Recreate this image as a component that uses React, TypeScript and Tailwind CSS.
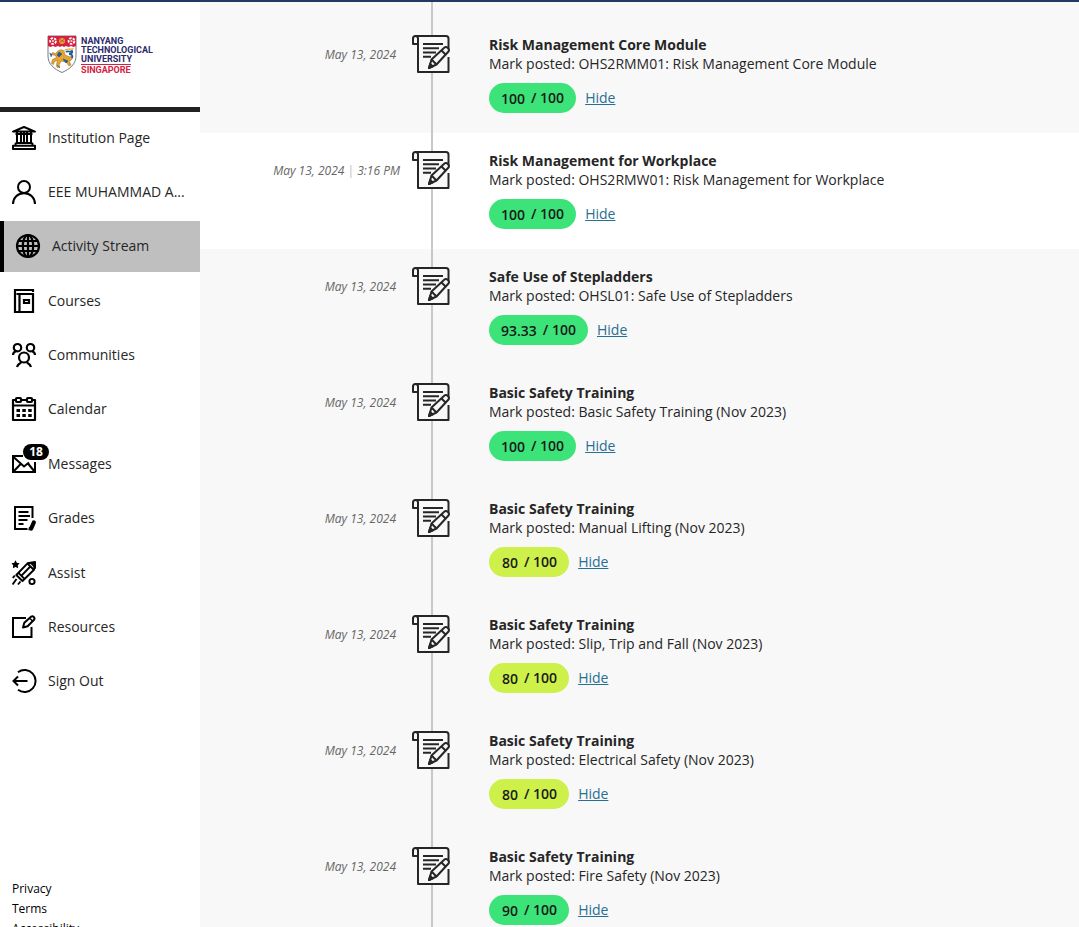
import type { ReactNode } from "react";

function Icon({ children, width = 2 }: { children: ReactNode; width?: number }) {
  return (
    <svg
      viewBox="0 0 24 24"
      className="size-6 shrink-0 overflow-visible"
      fill="none"
      stroke="currentColor"
      strokeWidth={width}
      aria-hidden="true"
    >
      {children}
    </svg>
  );
}

const InstitutionIcon = () => (
  <Icon width={2}>
    <path d="M1 5.6 12 1l11 4.6H1Z" strokeLinejoin="round" />
    <path d="M5 6v11M9 6v11M12 6v11M15 6v11M19 6v11M3.5 8h17M3.5 17h17" />
    <path d="M3.6 17v2.8M20.4 17v2.8M1 23v-3.2h22V23H1Z" strokeLinejoin="round" />
  </Icon>
);

const PersonIcon = () => (
  <Icon>
    <circle cx="12" cy="7" r="6" />
    <path d="M1 24c0-6.4 4.8-10.8 11-10.8S23 17.6 23 24" />
  </Icon>
);

const GlobeIcon = () => (
  <Icon width={2.2}>
    <circle cx="12" cy="12" r="11" />
    <ellipse cx="12" cy="12" rx="5.2" ry="11" />
    <path d="M12 1v22M1 12h22M3 7h18M3 17h18" />
  </Icon>
);

const BookIcon = () => (
  <Icon width={2.2}>
    <path d="M22 1H3v22h18V5H4.500M21 0v3M7.500 5v18M3 5V2" />
    <path d="M12 11h5v3h-5z" />
  </Icon>
);

const PeopleIcon = () => (
  <Icon width={2.200}>
    <circle cx="5.500" cy="4.700" r="3.700" />
    <circle cx="18.500" cy="4.700" r="3.700" />
    <circle cx="12" cy="14.500" r="5" />
    <path d="M1 12c0-2 1-3 3-3.700M23 12c0-2-1-3-3-3.700M5 24c.6-2.200 2-3.500 4.200-4.600M19 24c-.6-2.200-2-3.500-4.200-4.600" />
  </Icon>
);

const CalendarIcon = () => (
  <Icon width={2.200}>
    <path d="M3.500 3H1v20h22V3h-2.500M9.500 3h5M1 8.500h22" strokeLinejoin="round" />
    <rect x="4" y="1" width="5" height="4" rx="1" />
    <rect x="15" y="1" width="5" height="4" rx="1" />
    <path d="M4.500 13.500h3.500M10.300 13.500h3.500M16.200 13.500h3.500M4.500 18.500h3.500M10.300 18.500h3.500M16.200 18.500h3.500" strokeWidth="3" />
  </Icon>
);

const MailIcon = () => (
  <Icon>
    <path d="M11 4H1v16h22V10M1.500 5l10.500 9.500L17 10.500M1.500 19.500l7.200-7.500M22.500 19.500 16 11.500" />
  </Icon>
);

const GradesIcon = () => (
  <Icon>
    <path d="M20.500 12V1H3v22h12.500M6.500 6h10M6.500 10h11.500M6.500 14h9M6.500 18h5" />
    <path d="m21.800 16.500-2.600 6" strokeWidth="4.200" strokeLinecap="round" />
    <path d="m17.500 21-.7 3 2.500-1z" strokeWidth="1" />
  </Icon>
);

const RocketIcon = () => (
  <Icon width={1.900}>
    <path d="M15.500 2.300 23 1l-1 7.800L10.500 20 4.300 14 15.500 2.300Z" strokeLinejoin="round" />
    <path d="m15.500 2.500 6 6M6.500 11.800l6 6M9 15.200 18.800 5M19 2h4v4z" />
    <circle cx="20" cy="20.500" r="2.600" />
    <path d="m3.500 1.200.8 1.400 1.500.3-1 1.200.2 1.600-1.500-.7-1.500.7.200-1.600-1-1.200 1.500-.3Z" fill="currentColor" />
    <path d="M2.800 14.500.8 17M4.500 18 .6 23.500M8.500 20.500 6 23.500" />
  </Icon>
);

const ComposeIcon = () => (
  <Icon>
    <path d="M14 3H1v19h18.500V12" />
    <path d="m11 12.500 1.300-4.700 7-6.200c1.700-1 4 1.200 3 2.900l-6.700 6.700L11 12.500Z" strokeLinejoin="round" />
    <path d="m18 3.500 2.800 2.800" strokeWidth="1.400" />
  </Icon>
);

const SignOutIcon = () => (
  <Icon>
    <path d="M6 3.200a11 11 0 1 1 0 17.600M15.500 12H1.500M6 7.500 1.500 12 6 16.500" />
  </Icon>
);

const MarkIcon = () => (
  <svg
    viewBox="0 0 38 40"
    className="h-10 w-[38px]"
    fill="none"
    stroke="#262626"
    strokeWidth="2"
    strokeLinejoin="round"
    aria-hidden="true"
  >
    <path d="M3.500 2H34c1.500 0 2.500 1 2.500 2.500V38H6V4.500C6 3 5 2 3.500 2S1 3 1 4.500V10h5" fill="#f8f8f8" />
    <path d="M11 10h20M11 14.300h16M11 18.500h13M11 22.700h8" />
    <path d="M36.500 16v7" stroke="#f8f8f8" strokeWidth="3" />
    <path d="m17 34 2.500-8.500L32.500 13.500c2.300-1.500 5.500 1.800 4 4L24.500 30.500 17 34Z" fill="#f8f8f8" />
    <path d="m29.500 16.500 4.300 4.300M19.500 25.500l5 5" />
    <path d="m17 34 1.200-4 2.600 2.400z" fill="#262626" />
  </svg>
);

const Rose = ({ x }: { x: number }) => (
  <g transform={`translate(${x} 6)`}>
    <circle r="2.900" fill="none" stroke="#fff" strokeWidth="1.800" strokeDasharray="2.500 1.140" />
    <circle r="1.100" fill="#f7d9dd" />
  </g>
);

const Crest = () => (
  <svg viewBox="0 0 30 38" className="h-[38px] w-[30px]" aria-hidden="true">
    <path d="M1 1h28v20c0 8-6 13-14 16.500C7 34 1 29 1 21V1Z" fill="#fff" stroke="#77798c" strokeWidth="1" />
    <path d="M1 1h28v10l-2.500 1-2.500-1-2.500 1-2.500-1-2 1-2-1-2 1-2-1-2.500 1-2.500-1-2.500 1L1 11V1Z" fill="#d5213f" />
    <Rose x={6} />
    <Rose x={24.5} />
    <circle cx="15" cy="6" r="3" fill="#e2a33c" />
    <path d="M13 4.500 17 7M17 4.500 13 7" stroke="#a8602c" strokeWidth=".8" />
    <path d="M10 17c2-2.500 5-3 7-1l1 4 5 2 2-1c1 3-1 5-3 5l2 4-2 1-3-4-5-1-2 4 1 2-3 .500-.500-3 1-4-3 1-1 3-2-1 1-4 4-2-1-2-4-1 1-2 3 1Z" fill="#e8a52b" stroke="#90652b" strokeWidth=".5" />
    <path d="m12 17 3 2-3 3-2-2zM2.500 18l2.500 1.500-1 2.500M16 24l5 2-2 2zM10 30l3 3" fill="#285996" stroke="#285996" strokeWidth=".7" />
    <path d="M19 17c2-2 4 1 6-1 1 2-1 3-3 2.500M22 19c3 0 4 2 3 4" fill="none" stroke="#285996" strokeWidth="1.800" />
    <path d="M17.500 15.500c3-3 6 0 9-2" fill="none" stroke="#e8a52b" strokeWidth="1.200" />
  </svg>
);

const menu = [
  { label: "Institution Page", icon: <InstitutionIcon /> },
  { label: "EEE MUHAMMAD A...", icon: <PersonIcon /> },
  { label: "Activity Stream", icon: <GlobeIcon />, active: true },
  { label: "Courses", icon: <BookIcon /> },
  { label: "Communities", icon: <PeopleIcon /> },
  { label: "Calendar", icon: <CalendarIcon /> },
  { label: "Messages", icon: <MailIcon />, badge: 18 },
  { label: "Grades", icon: <GradesIcon /> },
  { label: "Assist", icon: <RocketIcon /> },
  { label: "Resources", icon: <ComposeIcon /> },
  { label: "Sign Out", icon: <SignOutIcon /> },
];

const entries = [
  { title: "Risk Management Core Module", item: "OHS2RMM01: Risk Management Core Module", score: "100" },
  { title: "Risk Management for Workplace", item: "OHS2RMW01: Risk Management for Workplace", score: "100", time: "3:16 PM" },
  { title: "Safe Use of Stepladders", item: "OHSL01: Safe Use of Stepladders", score: "93.33" },
  { title: "Basic Safety Training", item: "Basic Safety Training (Nov 2023)", score: "100" },
  { title: "Basic Safety Training", item: "Manual Lifting (Nov 2023)", score: "80" },
  { title: "Basic Safety Training", item: "Slip, Trip and Fall (Nov 2023)", score: "80" },
  { title: "Basic Safety Training", item: "Electrical Safety (Nov 2023)", score: "80" },
  { title: "Basic Safety Training", item: "Fire Safety (Nov 2023)", score: "90" },
];

function Sidebar() {
  return (
    <aside className="flex w-[200px] shrink-0 flex-col overflow-hidden bg-white text-[#262626]">
      <div className="flex h-[110px] shrink-0 items-center justify-center gap-1 border-b-5 border-[#222] pb-0.5">
        <Crest />
        <div className="flex flex-col pt-1 font-[Roboto,sans-serif] text-[9px] leading-[9px] font-bold text-[#2a2a6c]">
          <span>NANYANG</span>
          <span>TECHNOLOGICAL</span>
          <span>UNIVERSITY</span>
          <span className="self-start border-t border-[#d5213f] pt-px text-[#d5213f]">SINGAPORE</span>
        </div>
      </div>
      <nav aria-label="Main" className="shrink-0">
        <ul className="flex h-[595px] flex-col justify-between">
          {menu.map((m) => (
            <li key={m.label}>
              <a
                href="#"
                aria-current={m.active ? "page" : undefined}
                className={
                  m.active
                    ? "flex h-[51px] items-center gap-3 border-l-4 border-black bg-[#bfbfbf] px-3"
                    : "flex h-[51px] items-center gap-3 px-3"
                }
              >
                <span className="relative shrink-0 text-black">
                  {m.icon}
                  {m.badge && (
                    <span className="absolute -top-2 left-[11px] flex h-4 w-[26px] items-center justify-center rounded-full bg-black text-xs font-bold text-white">
                      {m.badge}
                    </span>
                  )}
                </span>
                <span className="whitespace-nowrap">{m.label}</span>
              </a>
            </li>
          ))}
        </ul>
      </nav>
      <footer className="mt-auto flex h-12 shrink-0 flex-col px-3 text-xs leading-5 text-black">
        <a href="#">Privacy</a>
        <a href="#">Terms</a>
        <a href="#">Accessibility</a>
      </footer>
    </aside>
  );
}

function Entry({ title, item, score, time }: (typeof entries)[number]) {
  return (
    <li className={time ? "flex h-[116px] bg-white" : "flex h-[116px]"}>
      <div
        className={
          time
            ? "w-[200px] shrink-0 pt-7 text-right text-xs leading-5 text-[#666] italic"
            : "w-[200px] shrink-0 pt-7 pr-1 text-right text-xs leading-5 text-[#666] italic"
        }
      >
        May 13, 2024
        {time && (
          <>
            <span className="text-[#bbb] not-italic"> | </span>
            {time}
          </>
        )}
      </div>
      <div className="relative ml-3 w-[38px] shrink-0 pt-[17px]">
        <span className="absolute inset-y-0 left-[19px] w-0.5 bg-[#c8c8c8]" />
        <span className="relative block">
          <MarkIcon />
        </span>
      </div>
      <div className="ml-[39px] min-w-0 flex-1 pt-[18px] leading-[19px] text-[#262626]">
        <h3 className="font-bold">{title}</h3>
        <p className="truncate">Mark posted: {item}</p>
        <div className="mt-2.5 flex items-center gap-[9px]">
          <span
            className={
              score === "80"
                ? "flex h-[30px] items-center gap-1.5 rounded-full bg-[#cdf04b] px-3 font-semibold text-[#1a1a1a]"
                : "flex h-[30px] items-center gap-1.5 rounded-full bg-[#3ce378] px-3 font-semibold text-[#1a1a1a]"
            }
          >
            <span className="min-w-[17px] text-right">{score}</span>
            <span className="pb-0.5">/ 100</span>
          </span>
          <button type="button" className="pb-0.5 text-[#276f93] underline">
            Hide
          </button>
        </div>
      </div>
    </li>
  );
}

export default function App() {
  return (
    <div className="flex h-screen flex-col border-t-2 border-[#1f3a63] bg-[#f8f8f8] font-['Open_Sans',sans-serif] text-sm">
      <div className="flex min-h-0 flex-1">
        <Sidebar />
        <main className="min-w-0 flex-1 overflow-y-auto [scrollbar-width:none]">
          <div className="flex h-[15px] pl-[231px]">
            <span className="w-0.5 bg-[#c8c8c8]" />
          </div>
          <ul>
            {entries.map((e, i) => (
              <Entry key={i} {...e} />
            ))}
          </ul>
        </main>
      </div>
    </div>
  );
}
